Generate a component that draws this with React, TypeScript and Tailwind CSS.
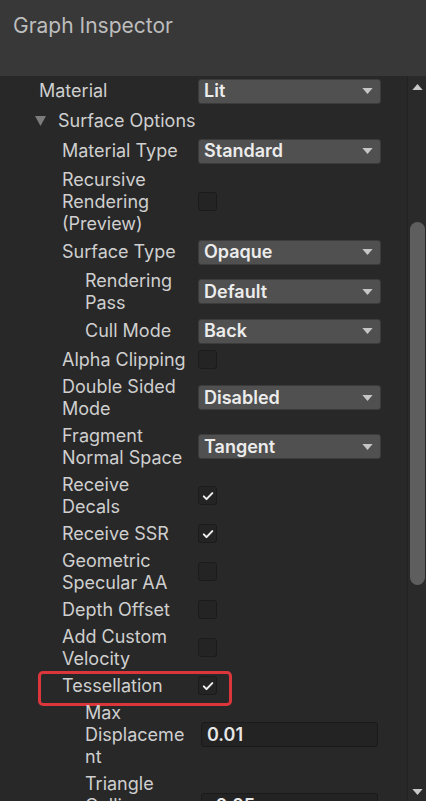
import type { ReactElement } from 'react';

type Field =
  | { kind: 'dropdown'; value: string }
  | { kind: 'toggle'; checked: boolean }
  | { kind: 'float'; value: string };

interface Prop {
  label: string;
  level: 0 | 1 | 2;
  field: Field;
  highlight?: boolean;
}

const INDENT: Record<Prop['level'], string> = {
  0: 'pl-[39px]',
  1: 'pl-[62px]',
  2: 'pl-[85px]',
};

const SURFACE_OPTIONS: Prop[] = [
  { label: 'Material Type', level: 1, field: { kind: 'dropdown', value: 'Standard' } },
  { label: 'Recursive Rendering (Preview)', level: 1, field: { kind: 'toggle', checked: false } },
  { label: 'Surface Type', level: 1, field: { kind: 'dropdown', value: 'Opaque' } },
  { label: 'Rendering Pass', level: 2, field: { kind: 'dropdown', value: 'Default' } },
  { label: 'Cull Mode', level: 2, field: { kind: 'dropdown', value: 'Back' } },
  { label: 'Alpha Clipping', level: 1, field: { kind: 'toggle', checked: false } },
  { label: 'Double Sided Mode', level: 1, field: { kind: 'dropdown', value: 'Disabled' } },
  { label: 'Fragment Normal Space', level: 1, field: { kind: 'dropdown', value: 'Tangent' } },
  { label: 'Receive Decals', level: 1, field: { kind: 'toggle', checked: true } },
  { label: 'Receive SSR', level: 1, field: { kind: 'toggle', checked: true } },
  { label: 'Geometric Specular AA', level: 1, field: { kind: 'toggle', checked: false } },
  { label: 'Depth Offset', level: 1, field: { kind: 'toggle', checked: false } },
  { label: 'Add Custom Velocity', level: 1, field: { kind: 'toggle', checked: false } },
  { label: 'Tessellation', level: 1, field: { kind: 'toggle', checked: true }, highlight: true },
  { label: 'Max Displacement', level: 2, field: { kind: 'float', value: '0.01' } },
  { label: 'Triangle Culling Epsilon', level: 2, field: { kind: 'float', value: '-0.05' } },
];

function Caret({ className }: { className: string }): ReactElement {
  return (
    <svg className={className} viewBox="0 0 12 7" fill="currentColor" aria-hidden="true">
      <path d="M0 0h12L6 7z" />
    </svg>
  );
}

function Dropdown({ value }: { value: string }): ReactElement {
  return (
    <div className="flex h-[25px] w-[183px] shrink-0 items-center justify-between rounded-[3px] border border-[#3b3b3b] bg-[#505050] pl-[5px] pr-[7px]">
      <span className="text-[18px] font-semibold leading-none text-[#ececec]">{value}</span>
      <Caret className="h-[6px] w-[11px] text-[#c6c6c6]" />
    </div>
  );
}

function Toggle({ checked }: { checked: boolean }): ReactElement {
  return (
    <span className="flex h-[19px] w-[19px] shrink-0 items-center justify-center rounded-[3px] border border-[#1b1b1b] bg-[#242424]">
      {checked && (
        <svg className="h-[12px] w-[12px] text-[#eeeeee]" viewBox="0 0 12 12" fill="none" aria-hidden="true">
          <path d="M1.8 6.4l2.7 2.7 5.8-6" stroke="currentColor" strokeWidth="2" strokeLinecap="round" strokeLinejoin="round" />
        </svg>
      )}
    </span>
  );
}

function FloatField({ value }: { value: string }): ReactElement {
  return (
    <div className="ml-[3px] flex h-[25px] w-[177px] shrink-0 items-center rounded-[3px] border border-[#1a1a1a] bg-[#232323] px-[5px]">
      <span className="text-[18px] font-semibold leading-none text-[#e6e6e6]">{value}</span>
    </div>
  );
}

function PropRow({ prop }: { prop: Prop }): ReactElement {
  const { field } = prop;
  return (
    <div className="relative flex items-center py-[2.5px]">
      <div
        className={`w-[186px] shrink-0 text-[18px] leading-[22px] text-[#cfcfcf] [overflow-wrap:break-word] ${INDENT[prop.level]}`}
      >
        {prop.label}
      </div>
      <div className="ml-[12px] flex">
        {field.kind === 'dropdown' && <Dropdown value={field.value} />}
        {field.kind === 'toggle' && <Toggle checked={field.checked} />}
        {field.kind === 'float' && <FloatField value={field.value} />}
      </div>
      {prop.highlight && (
        <span className="pointer-events-none absolute left-[38px] top-[-1px] h-[35px] w-[194px] rounded-[5px] border-[3px] border-[#dc363d]" />
      )}
    </div>
  );
}

function Scrollbar(): ReactElement {
  return (
    <div className="flex w-[19px] shrink-0 flex-col items-center border-l border-[#222222] bg-[#2a2a2a]">
      <Caret className="mt-[8px] h-[6px] w-[11px] rotate-180 text-[#c8c8c8]" />
      <div className="mt-[132px] h-[363px] w-[15px] rounded-full bg-[#5e5e5e]" />
      <div className="flex-1" />
      <Caret className="mb-[6px] h-[6px] w-[11px] text-[#c8c8c8]" />
    </div>
  );
}

export default function App(): ReactElement {
  return (
    <div className="flex h-[801px] w-[426px] flex-col overflow-hidden bg-[#282828] font-['Inter','Noto_Sans',sans-serif]">
      <header className="h-[76px] shrink-0 bg-[#383838] px-[13px] pt-[11px]">
        <h1 className="text-[21px] leading-[30px] text-[#bdbdbd]">Graph Inspector</h1>
      </header>
      <div className="flex min-h-0 flex-1">
        <div className="min-w-0 flex-1 overflow-hidden">
          <div className="flex h-[30px] items-center">
            <div className="w-[186px] shrink-0 pl-[39px] text-[18px] leading-[22px] text-[#cfcfcf]">Material</div>
            <div className="ml-[12px]">
              <Dropdown value="Lit" />
            </div>
          </div>
          <div className="flex h-[30px] items-center gap-[12px] pl-[35px]">
            <svg className="h-[10px] w-[11px] text-[#7c7c7c]" viewBox="0 0 11 10" fill="currentColor" aria-hidden="true">
              <path d="M0 0h11L5.5 10z" />
            </svg>
            <span className="text-[18px] leading-[22px] text-[#cfcfcf]">Surface Options</span>
          </div>
          {SURFACE_OPTIONS.map((p) => (
            <PropRow key={p.label} prop={p} />
          ))}
        </div>
        <Scrollbar />
      </div>
    </div>
  );
}
